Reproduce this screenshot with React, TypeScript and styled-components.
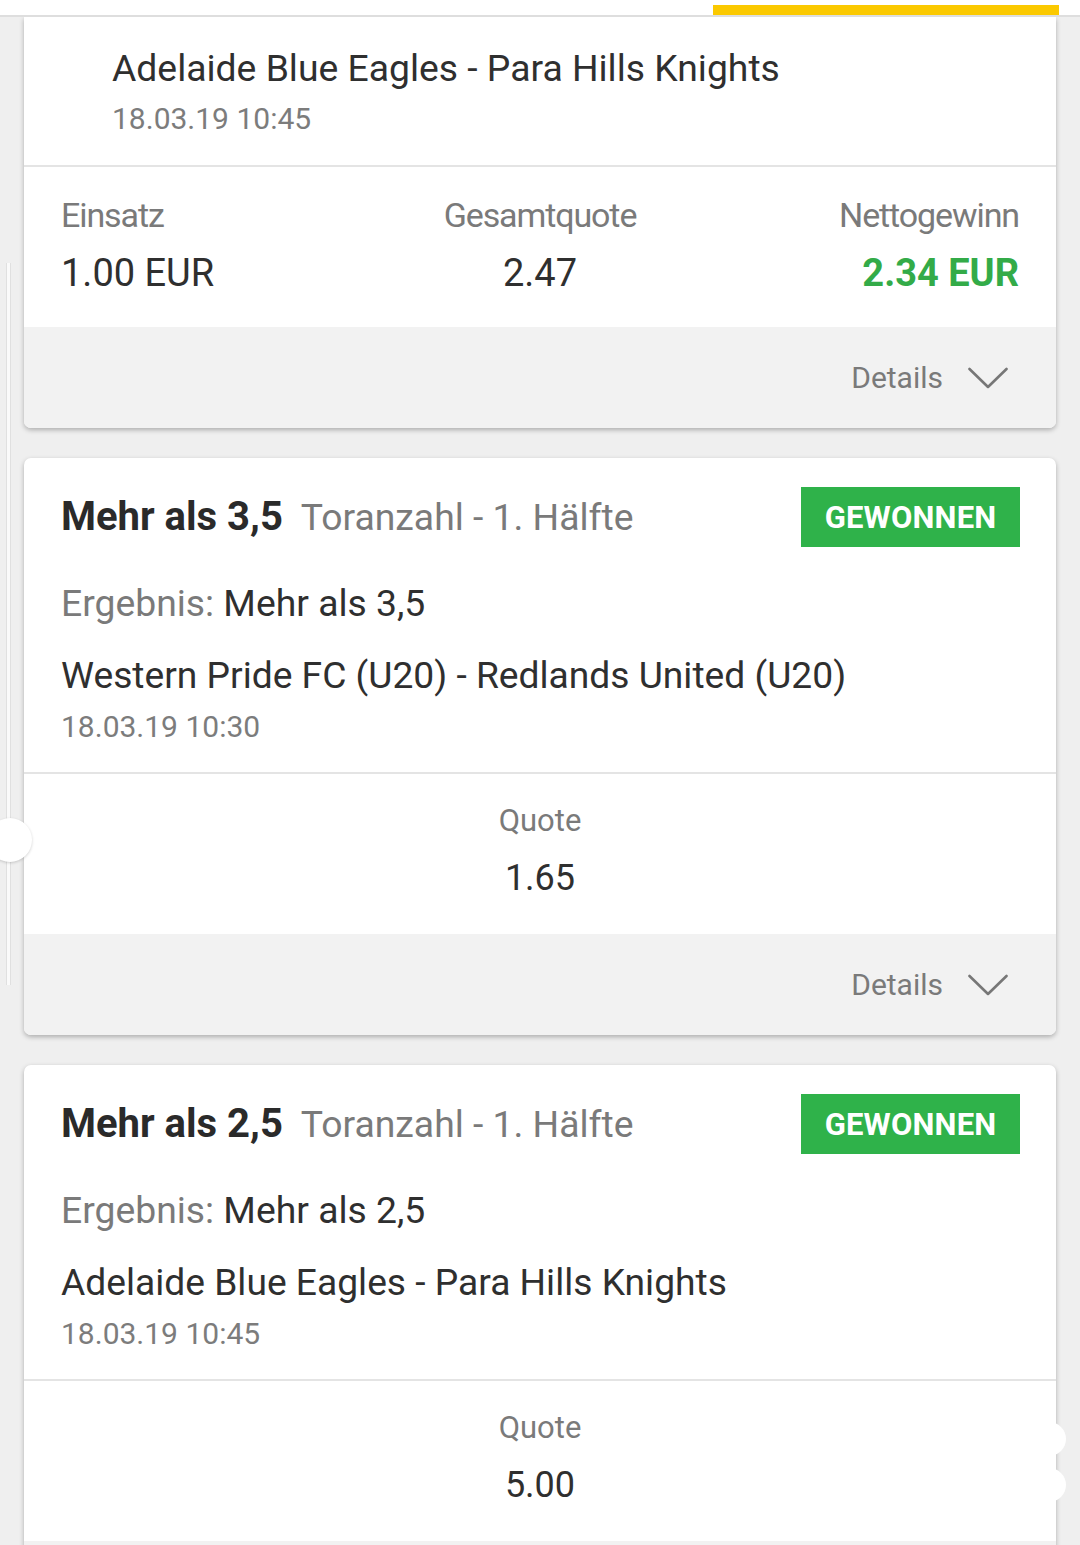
import React from "react";
import styled, { createGlobalStyle } from "styled-components";

const GlobalStyle = createGlobalStyle`
  html, body {
    margin: 0;
    padding: 0;
    background: #efefef;
  }
  body {
    font-family: Roboto, "Noto Sans", "Liberation Sans", sans-serif;
    color: #2f2f2f;
    -webkit-font-smoothing: antialiased;
  }
  * { box-sizing: border-box; }
`;

const Page = styled.div`
  position: relative;
  width: 1080px;
  height: 1545px;
  overflow: hidden;
  background: #efefef;
`;

const TopBar = styled.div`
  height: 17px;
  background: #ffffff;
  border-bottom: 2px solid #dedede;
  display: flex;
  justify-content: flex-end;
  align-items: flex-end;
  padding-right: 21px;
  position: relative;
  z-index: 2;
`;

const TabIndicator = styled.div`
  width: 346px;
  height: 10px;
  background: #fbc900;
`;

const List = styled.div`
  display: flex;
  flex-direction: column;
  gap: 30px;
  padding: 0 24px;
`;

const Card = styled.section<{ $clipTop?: boolean }>`
  background: #ffffff;
  border-radius: ${(p) => (p.$clipTop ? "0 0 7px 7px" : "7px")};
  box-shadow: 0 2px 5px rgba(0, 0, 0, 0.28);
  overflow: hidden;
`;

const EventHeader = styled.div`
  padding: 29px 37px 28px 88px;
  border-bottom: 2px solid #e4e4e4;
`;

const Title = styled.div`
  font-size: 37.3px;
  line-height: 44px;
  color: #2f2f2f;
`;

const DateText = styled.div<{ $gap: number }>`
  margin-top: ${(p) => p.$gap}px;
  font-size: 30px;
  line-height: 36px;
  color: #7c7c7c;
`;

const StatsRow = styled.div`
  display: grid;
  grid-template-columns: 1fr 1fr 1fr;
  padding: 28px 37px 31px;
`;

const StatCol = styled.div<{ $align: "left" | "center" | "right" }>`
  display: flex;
  flex-direction: column;
  gap: 15px;
  text-align: ${(p) => p.$align};
`;

const StatLabel = styled.div`
  font-size: 34px;
  line-height: 40px;
  letter-spacing: -1.1px;
  color: #7a7a7a;
`;

const StatValue = styled.div<{ $positive?: boolean }>`
  font-size: 38px;
  line-height: 46px;
  color: ${(p) => (p.$positive ? "#33ab48" : "#2f2f2f")};
  font-weight: ${(p) => (p.$positive ? 700 : 400)};
`;

const Footer = styled.div`
  height: 101px;
  background: #f2f2f2;
  display: flex;
  align-items: center;
  justify-content: flex-end;
  gap: 25px;
  padding-right: 48px;
`;

const DetailsText = styled.span`
  font-size: 30px;
  line-height: 36px;
  color: #7a7a7a;
`;

const PickBody = styled.div`
  padding: 29px 36px 27px 37px;
  border-bottom: 2px solid #e4e4e4;
`;

const PickHeader = styled.div`
  display: flex;
  align-items: center;
  justify-content: space-between;
  height: 60px;
`;

const PickTitle = styled.div`
  display: flex;
  align-items: baseline;
  gap: 18px;
  line-height: 46px;
`;

const PickName = styled.span`
  font-size: 40px;
  font-weight: 700;
  color: #2a2a2a;
`;

const MarketName = styled.span`
  font-size: 37.3px;
  color: #7a7a7a;
`;

const Badge = styled.div`
  width: 219px;
  height: 60px;
  background: #2fb24a;
  color: #ffffff;
  font-weight: 700;
  font-size: 31px;
  letter-spacing: 0.2px;
  display: flex;
  align-items: center;
  justify-content: center;
`;

const ResultLine = styled.div`
  margin-top: 34px;
  font-size: 37.3px;
  line-height: 44px;
  color: #2f2f2f;
`;

const ResultLabel = styled.span`
  color: #7a7a7a;
`;

const MatchName = styled.div`
  margin-top: 28px;
  font-size: 37.2px;
  line-height: 44px;
  color: #2f2f2f;
`;

const QuoteBlock = styled.div`
  display: flex;
  flex-direction: column;
  align-items: center;
  gap: 16px;
  padding: 28px 0 34px;
`;

const QuoteLabel = styled.div`
  font-size: 31px;
  line-height: 38px;
  color: #7a7a7a;
`;

const QuoteValue = styled.div`
  font-size: 36px;
  line-height: 44px;
  color: #2f2f2f;
`;

const ScrollTrack = styled.div`
  position: absolute;
  left: 6px;
  top: 263px;
  width: 5px;
  height: 722px;
  background: #fafafa;
  border-left: 1px solid #e0e0e0;
  border-right: 1px solid #e0e0e0;
`;

const ScrollThumb = styled.div`
  position: absolute;
  left: -12px;
  top: 818px;
  width: 44px;
  height: 44px;
  border-radius: 50%;
  background: #ffffff;
  box-shadow: 0 1px 3px rgba(0, 0, 0, 0.18);
`;

const SideBump = styled.div<{ $top: number }>`
  position: absolute;
  left: 1032px;
  top: ${(p) => p.$top}px;
  width: 34px;
  height: 34px;
  border-radius: 50%;
  background: #ffffff;
`;

const Chevron = () => (
  <svg width="40" height="22" viewBox="0 0 40 22" fill="none">
    <polyline
      points="1.5,2 20,20 38.5,2"
      stroke="#777777"
      strokeWidth="2.6"
      strokeLinecap="round"
      strokeLinejoin="round"
    />
  </svg>
);

const DetailsFooter = () => (
  <Footer>
    <DetailsText>Details</DetailsText>
    <Chevron />
  </Footer>
);

type Pick = {
  pick: string;
  market: string;
  result: string;
  match: string;
  date: string;
  quote: string;
};

const picks: Pick[] = [
  {
    pick: "Mehr als 3,5",
    market: "Toranzahl - 1. Hälfte",
    result: "Mehr als 3,5",
    match: "Western Pride FC (U20) - Redlands United (U20)",
    date: "18.03.19 10:30",
    quote: "1.65",
  },
  {
    pick: "Mehr als 2,5",
    market: "Toranzahl - 1. Hälfte",
    result: "Mehr als 2,5",
    match: "Adelaide Blue Eagles - Para Hills Knights",
    date: "18.03.19 10:45",
    quote: "5.00",
  },
];

const PickCard = ({ p }: { p: Pick }) => (
  <Card>
    <PickBody>
      <PickHeader>
        <PickTitle>
          <PickName>{p.pick}</PickName>
          <MarketName>{p.market}</MarketName>
        </PickTitle>
        <Badge>GEWONNEN</Badge>
      </PickHeader>
      <ResultLine>
        <ResultLabel>Ergebnis: </ResultLabel>
        {p.result}
      </ResultLine>
      <MatchName>{p.match}</MatchName>
      <DateText $gap={12}>{p.date}</DateText>
    </PickBody>
    <QuoteBlock>
      <QuoteLabel>Quote</QuoteLabel>
      <QuoteValue>{p.quote}</QuoteValue>
    </QuoteBlock>
    <DetailsFooter />
  </Card>
);

export default function App() {
  return (
    <Page>
      <GlobalStyle />
      <TopBar>
        <TabIndicator />
      </TopBar>
      <List>
        <Card $clipTop>
          <EventHeader>
            <Title>Adelaide Blue Eagles - Para Hills Knights</Title>
            <DateText $gap={11}>18.03.19 10:45</DateText>
          </EventHeader>
          <StatsRow>
            <StatCol $align="left">
              <StatLabel>Einsatz</StatLabel>
              <StatValue>1.00 EUR</StatValue>
            </StatCol>
            <StatCol $align="center">
              <StatLabel>Gesamtquote</StatLabel>
              <StatValue>2.47</StatValue>
            </StatCol>
            <StatCol $align="right">
              <StatLabel>Nettogewinn</StatLabel>
              <StatValue $positive>2.34 EUR</StatValue>
            </StatCol>
          </StatsRow>
          <DetailsFooter />
        </Card>
        {picks.map((p) => (
          <PickCard key={p.quote} p={p} />
        ))}
      </List>
      <ScrollTrack />
      <ScrollThumb />
      <SideBump $top={1422} />
      <SideBump $top={1468} />
    </Page>
  );
}
